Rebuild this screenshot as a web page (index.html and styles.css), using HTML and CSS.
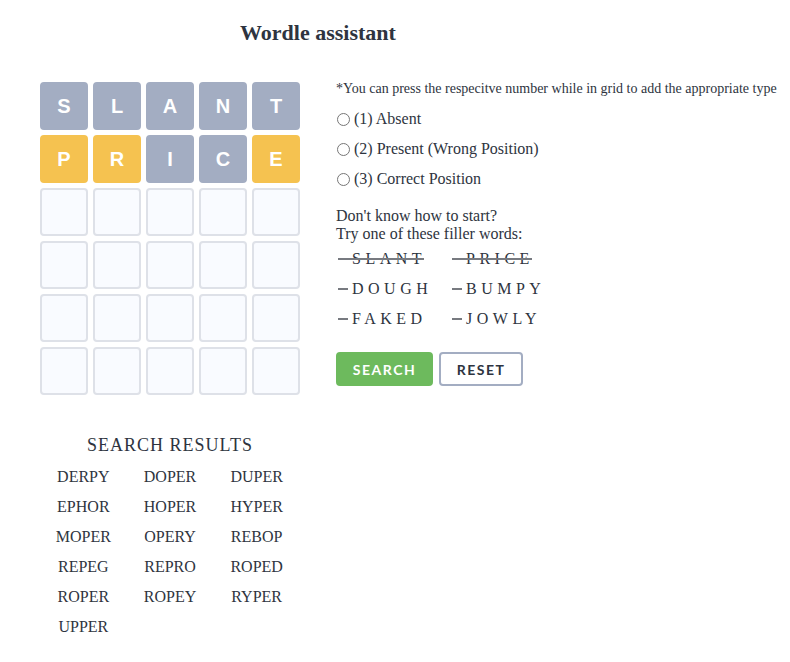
FILE: index.html
```html
<!DOCTYPE html>
<html>
<head>
<meta charset="utf-8">
<link rel="stylesheet" href="styles.css">
</head>
<body>
<header class="header"><h1 class="title">Wordle assistant</h1></header>
<main class="main">
  <section class="left">
    <div class="grid">
      <div class="tile absent">S</div><div class="tile absent">L</div><div class="tile absent">A</div><div class="tile absent">N</div><div class="tile absent">T</div>
      <div class="tile present">P</div><div class="tile present">R</div><div class="tile absent">I</div><div class="tile absent">C</div><div class="tile present">E</div>
      <div class="tile"></div><div class="tile"></div><div class="tile"></div><div class="tile"></div><div class="tile"></div>
      <div class="tile"></div><div class="tile"></div><div class="tile"></div><div class="tile"></div><div class="tile"></div>
      <div class="tile"></div><div class="tile"></div><div class="tile"></div><div class="tile"></div><div class="tile"></div>
      <div class="tile"></div><div class="tile"></div><div class="tile"></div><div class="tile"></div><div class="tile"></div>
    </div>
    <h2 class="results-title">SEARCH RESULTS</h2>
    <div class="results">
      <span>DERPY</span><span>DOPER</span><span>DUPER</span>
      <span>EPHOR</span><span>HOPER</span><span>HYPER</span>
      <span>MOPER</span><span>OPERY</span><span>REBOP</span>
      <span>REPEG</span><span>REPRO</span><span>ROPED</span>
      <span>ROPER</span><span>ROPEY</span><span>RYPER</span>
      <span>UPPER</span>
    </div>
  </section>
  <section class="right">
    <p class="hint">*You can press the respecitve number while in grid to add the appropriate type</p>
    <div class="options">
      <label class="option"><input type="radio" name="type" class="radio">(1) Absent</label>
      <label class="option"><input type="radio" name="type" class="radio">(2) Present (Wrong Position)</label>
      <label class="option"><input type="radio" name="type" class="radio">(3) Correct Position</label>
    </div>
    <p class="starter">Don't know how to start?<br>Try one of these filler words:</p>
    <div class="fillers">
      <span class="filler used">SLANT</span><span class="filler used">PRICE</span>
      <span class="filler">DOUGH</span><span class="filler">BUMPY</span>
      <span class="filler">FAKED</span><span class="filler">JOWLY</span>
    </div>
    <div class="buttons">
      <button class="btn btn-search">SEARCH</button>
      <button class="btn btn-reset">RESET</button>
    </div>
  </section>
</main>
</body>
</html>
```
FILE: styles.css
```css
html, body {
  margin: 0;
  padding: 0;
  background: #ffffff;
}
body {
  font-family: "Liberation Serif", "Times New Roman", serif;
  color: #2e3440;
}
.header {
  width: 636px;
  text-align: center;
  padding-top: 18px;
}
.title {
  margin: 0;
  font-size: 22px;
  line-height: 30px;
  font-weight: bold;
  color: #2e3440;
}
.main {
  display: flex;
  gap: 36px;
  margin-top: 32px;
  padding-left: 40px;
}
.left {
  width: 260px;
  display: flex;
  flex-direction: column;
}
.grid {
  margin-top: 2px;
  display: grid;
  grid-template-columns: repeat(5, 48px);
  grid-auto-rows: 48px;
  gap: 5px;
}
.tile {
  box-sizing: border-box;
  border: 2px solid #dee1e8;
  background: #f9fbff;
  border-radius: 4px;
  display: flex;
  align-items: center;
  justify-content: center;
  font-family: "Liberation Sans", Arial, sans-serif;
  font-weight: bold;
  font-size: 20px;
  color: #ffffff;
}
.tile.absent {
  background: #a3adc2;
  border-color: #a3adc2;
}
.tile.present {
  background: #f5c250;
  border-color: #f5c250;
}
.results-title {
  margin: 38px 0 0 0;
  font-size: 18px;
  line-height: 24px;
  font-weight: normal;
  letter-spacing: 1px;
  text-align: center;
}
.results {
  margin-top: 5px;
  display: grid;
  grid-template-columns: repeat(3, 1fr);
  grid-auto-rows: 30px;
  align-items: center;
  text-align: center;
  font-size: 16px;
}
.right {
  display: flex;
  flex-direction: column;
  align-items: flex-start;
}
.hint {
  margin: 0;
  font-size: 14px;
  line-height: 18px;
}
.options {
  margin-top: 6px;
  display: flex;
  flex-direction: column;
}
.option {
  display: flex;
  align-items: center;
  height: 30px;
  font-size: 16px;
}
.radio {
  margin: 0 4px 0 1px;
  width: 13px;
  height: 13px;
}
.starter {
  margin: 13px 0 0 0;
  font-size: 16px;
  line-height: 18px;
}
.fillers {
  margin-top: 1px;
  display: grid;
  grid-template-columns: 114px 114px;
  grid-auto-rows: 30px;
  align-items: center;
  padding-left: 2px;
}
.filler {
  position: relative;
  justify-self: start;
  padding-left: 14px;
  font-size: 16px;
  letter-spacing: 4.5px;
}
.filler::before {
  content: "";
  position: absolute;
  left: 0;
  top: 50%;
  width: 10px;
  height: 2px;
  margin-top: -1px;
  background: #777a80;
}
.filler.used::before {
  width: calc(100% - 2px);
}
.buttons {
  margin-top: 18px;
  display: flex;
  gap: 6px;
}
.btn {
  box-sizing: border-box;
  height: 34px;
  border-radius: 4px;
  font-family: Lato, "Liberation Sans", sans-serif;
  font-weight: bold;
  font-size: 14px;
  letter-spacing: 1.5px;
  cursor: pointer;
}
.btn-search {
  width: 97px;
  background: #6dba5d;
  border: 2px solid #6dba5d;
  color: #ffffff;
}
.btn-reset {
  width: 84px;
  background: #ffffff;
  border: 2px solid #a3adc2;
  color: #2e3440;
}
```
